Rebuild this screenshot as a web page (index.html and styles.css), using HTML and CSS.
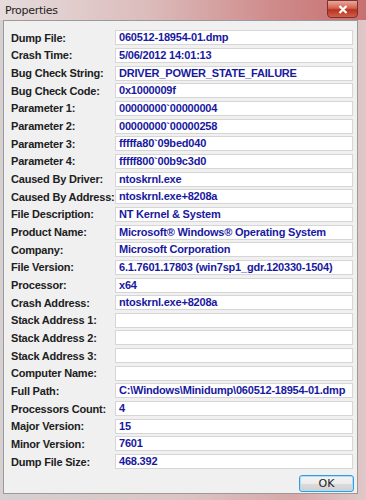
FILE: index.html
```html
<!DOCTYPE html>
<html>
<head>
    <title>Properties</title>
    <link rel="stylesheet" href="styles.css">
</head>
<body>
    <div class="window">
        <div class="titlebar">
            <span class="title">Properties</span>
            <span class="close">
                <svg width="10" height="9" viewBox="0 0 10 9"><path d="M1.5 1 L8.5 8 M8.5 1 L1.5 8" stroke="#fff" stroke-width="2.2"/></svg>
            </span>
        </div>
        <div class="client">
            <div class="rows">
                <label>Dump File:</label><div class="field">060512-18954-01.dmp</div>
                <label>Crash Time:</label><div class="field">5/06/2012 14:01:13</div>
                <label>Bug Check String:</label><div class="field">DRIVER_POWER_STATE_FAILURE</div>
                <label>Bug Check Code:</label><div class="field">0x1000009f</div>
                <label>Parameter 1:</label><div class="field">00000000`00000004</div>
                <label>Parameter 2:</label><div class="field">00000000`00000258</div>
                <label>Parameter 3:</label><div class="field">fffffa80`09bed040</div>
                <label>Parameter 4:</label><div class="field">fffff800`00b9c3d0</div>
                <label>Caused By Driver:</label><div class="field">ntoskrnl.exe</div>
                <label>Caused By Address:</label><div class="field">ntoskrnl.exe+8208a</div>
                <label>File Description:</label><div class="field">NT Kernel &amp; System</div>
                <label>Product Name:</label><div class="field">Microsoft® Windows® Operating System</div>
                <label>Company:</label><div class="field">Microsoft Corporation</div>
                <label>File Version:</label><div class="field">6.1.7601.17803 (win7sp1_gdr.120330-1504)</div>
                <label>Processor:</label><div class="field">x64</div>
                <label>Crash Address:</label><div class="field">ntoskrnl.exe+8208a</div>
                <label>Stack Address 1:</label><div class="field"></div>
                <label>Stack Address 2:</label><div class="field"></div>
                <label>Stack Address 3:</label><div class="field"></div>
                <label>Computer Name:</label><div class="field"></div>
                <label>Full Path:</label><div class="field">C:\Windows\Minidump\060512-18954-01.dmp</div>
                <label>Processors Count:</label><div class="field">4</div>
                <label>Major Version:</label><div class="field">15</div>
                <label>Minor Version:</label><div class="field">7601</div>
                <label>Dump File Size:</label><div class="field">468.392</div>
            </div>
            <div class="footer">
                <button>OK</button>
            </div>
        </div>
    </div>
</body>
</html>
```

FILE: styles.css
```css
body {
    margin: 0;
    font-family: "Liberation Sans", Arial, sans-serif;
}

.window {
    width: 366px;
    height: 500px;
    display: flex;
    flex-direction: column;
    background: linear-gradient(90deg, #d6d0d0 0%, #dcc4c4 50%, #d8a8a8 80%, #e0c8c8 100%);
}

.titlebar {
    height: 20px;
    display: flex;
    align-items: center;
    justify-content: space-between;
    padding: 0 8px 0 5px;
    background: linear-gradient(90deg, #e6dcdc 0%, #dcbcbc 40%, #cf8a8a 75%, #c77070 100%);
}
.title {
    font-family: "DejaVu Sans", sans-serif;
    font-size: 11px;
    color: #1e1e1e;
    letter-spacing: -0.3px;
}
.close {
    width: 29px;
    height: 16px;
    margin-top: -2px;
    display: flex;
    align-items: center;
    justify-content: center;
    border: 1px solid #7a3030;
    border-radius: 0 0 4px 4px;
    background: linear-gradient(#e8a89c 0%, #d4624e 45%, #b83220 55%, #d0604a 100%);
}

.client {
    flex: 1;
    margin: 0 8px 6px 3px;
    background-color: #f0f0f0;
    border: 1px solid #9a9a9a;
    display: flex;
    flex-direction: column;
}

.rows {
    display: grid;
    grid-template-columns: 104px 238px;
    grid-auto-rows: 17.67px;
    align-items: center;
    padding: 8px 0 0 7px;
}
.rows label {
    font-size: 11px;
    font-weight: bold;
    color: #202020;
    letter-spacing: -0.2px;
}
.field {
    height: 13px;
    border: 1px solid #d6d6d6;
    background-color: white;
    padding-left: 3px;
    font-size: 11px;
    font-weight: bold;
    line-height: 13px;
    color: #1818a0;
    letter-spacing: -0.2px;
    white-space: nowrap;
    overflow: hidden;
}

.footer {
    display: flex;
    justify-content: flex-end;
    padding: 5px 3px 0 0;
}
button {
    width: 55px;
    height: 17px;
    font-family: "DejaVu Sans", sans-serif;
    font-size: 11px;
    color: #202020;
    border: 1px solid #3c9ad8;
    border-radius: 3px;
    background: linear-gradient(#f4f4f4 0%, #ececec 50%, #dcdcdc 51%, #d0d0d0 100%);
    box-shadow: inset 0 0 0 1px #a8e0f8;
    padding: 0;
}
```
